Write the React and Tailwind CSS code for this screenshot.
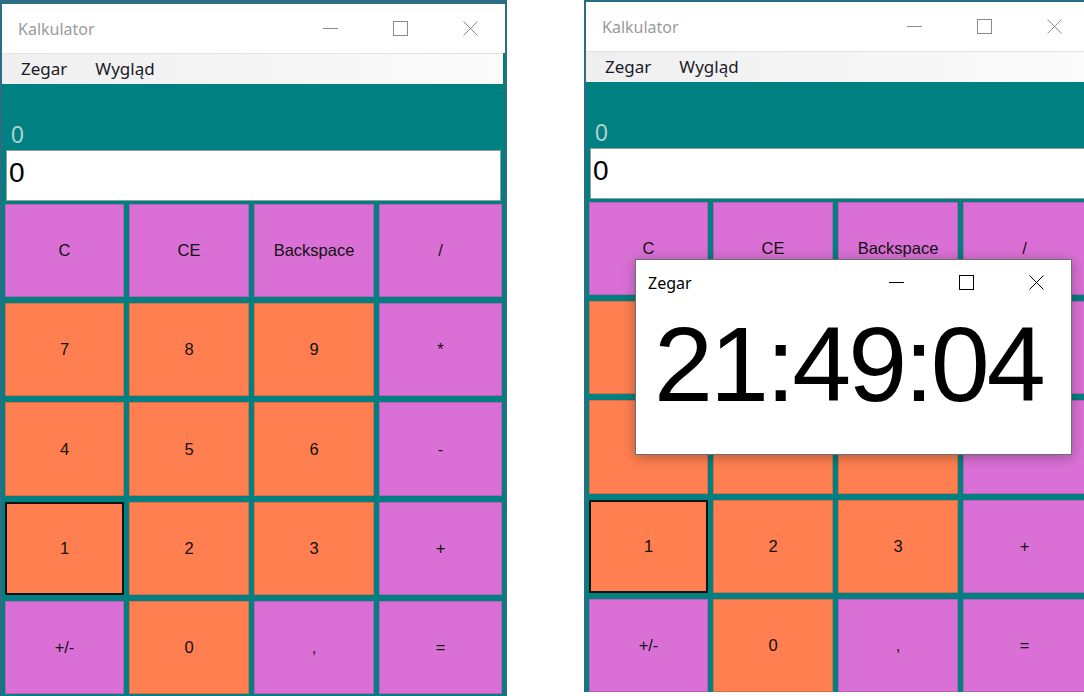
import clsx from "clsx";

const buttons = [
  ["C", "p"], ["CE", "p"], ["Backspace", "p"], ["/", "p"],
  ["7", "o"], ["8", "o"], ["9", "o"], ["*", "p"],
  ["4", "o"], ["5", "o"], ["6", "o"], ["-", "p"],
  ["1", "o"], ["2", "o"], ["3", "o"], ["+", "p"],
  ["+/-", "p"], ["0", "o"], [",", "p"], ["=", "p"],
];

// min / max / close, jak w Windows 10
const CaptionButtons = ({ color }) => (
  <div className="flex h-full">
    <div className="flex w-[70px] items-center justify-center">
      <svg width="15" height="15" viewBox="0 0 15 15">
        <line x1="0" y1="7.5" x2="15" y2="7.5" stroke={color} strokeWidth="1" />
      </svg>
    </div>
    <div className="flex w-[70px] items-center justify-center">
      <svg width="15" height="15" viewBox="0 0 15 15">
        <rect x="0.5" y="0.5" width="14" height="14" fill="none" stroke={color} strokeWidth="1" />
      </svg>
    </div>
    <div className="flex w-[70px] items-center justify-center">
      <svg width="15" height="15" viewBox="0 0 15 15">
        <path d="M0.5 0.5 L14.5 14.5 M14.5 0.5 L0.5 14.5" stroke={color} strokeWidth="1" />
      </svg>
    </div>
  </div>
);

const CalcWindow = ({ className }) => (
  <div
    className={clsx(
      "flex w-[507px] shrink-0 flex-col overflow-hidden border-x-2 border-t-4 border-[#2c6d85] bg-[#008080]",
      className
    )}
  >
    {/* pasek tytułu */}
    <div className="flex h-[49px] shrink-0 items-center justify-between bg-white">
      <span className="pl-[16px] font-['Noto_Sans',sans-serif] text-[16px] text-[#9a9a9a]">
        Kalkulator
      </span>
      <CaptionButtons color="#8a8a8a" />
    </div>

    {/* menu */}
    <div className="mr-[2px] flex h-[31px] shrink-0 items-center border-t border-[#e3e3e3] bg-linear-to-r from-[#efefef] to-[#fbfbfb] pl-[5px] font-['Noto_Sans',sans-serif] text-[17px] text-[#1a1a28]">
      <span className="px-[14px]">Zegar</span>
      <span className="px-[14px]">Wygląd</span>
    </div>

    {/* wyświetlacz */}
    <div className="flex flex-col pt-[40px] font-['Liberation_Sans',Arial,sans-serif]">
      <div className="h-[26px] pl-[9px] text-[23px] leading-none text-[#b0d2d2]">0</div>
      <div className="mx-[4px] h-[51px] border border-[#9a9a9a] bg-white pl-[2px] pt-[8px] text-[28px] leading-none text-black">
        0
      </div>
    </div>

    {/* przyciski */}
    <div className="mt-[3px] grid h-[490px] shrink-0 grid-cols-[119px_120px_120px_1fr] grid-rows-5 gap-x-[5px] gap-y-[6px] px-[3px] font-['Liberation_Sans',Arial,sans-serif] text-[16.5px] text-[#111]">
      {buttons.map(([label, kind]) => (
        <div
          key={label}
          className={clsx(
            "flex items-center justify-center",
            kind === "p" ? "bg-[#da70d6]" : "bg-[#ff7f50]",
            label === "1" ? "border-2 border-[#111]" : "border border-black/15"
          )}
        >
          {label}
        </div>
      ))}
    </div>
  </div>
);

export default function App() {
  return (
    <div className="relative flex h-[696px] w-[1084px] items-start overflow-hidden bg-white">
      <CalcWindow className="h-[702px]" />
      <CalcWindow className="ml-[77px] mt-[-2px] h-[694px]" />

      {/* okno zegara nad kalkulatorem */}
      <div className="absolute left-[635px] top-[259px] flex h-[196px] w-[437px] flex-col border border-[#6e6e6e] bg-white shadow-[0_2px_12px_rgba(0,0,0,0.3)]">
        <div className="flex h-[45px] shrink-0 items-center justify-between">
          <span className="pl-[12px] font-['Noto_Sans',sans-serif] text-[16px] text-black">Zegar</span>
          <CaptionButtons color="#000" />
        </div>
        <div className="mt-[6px] pl-[18px] font-['Liberation_Sans',Arial,sans-serif] text-[106px] leading-none tracking-[-3px] text-black">
          21:49:04
        </div>
      </div>
    </div>
  );
}
